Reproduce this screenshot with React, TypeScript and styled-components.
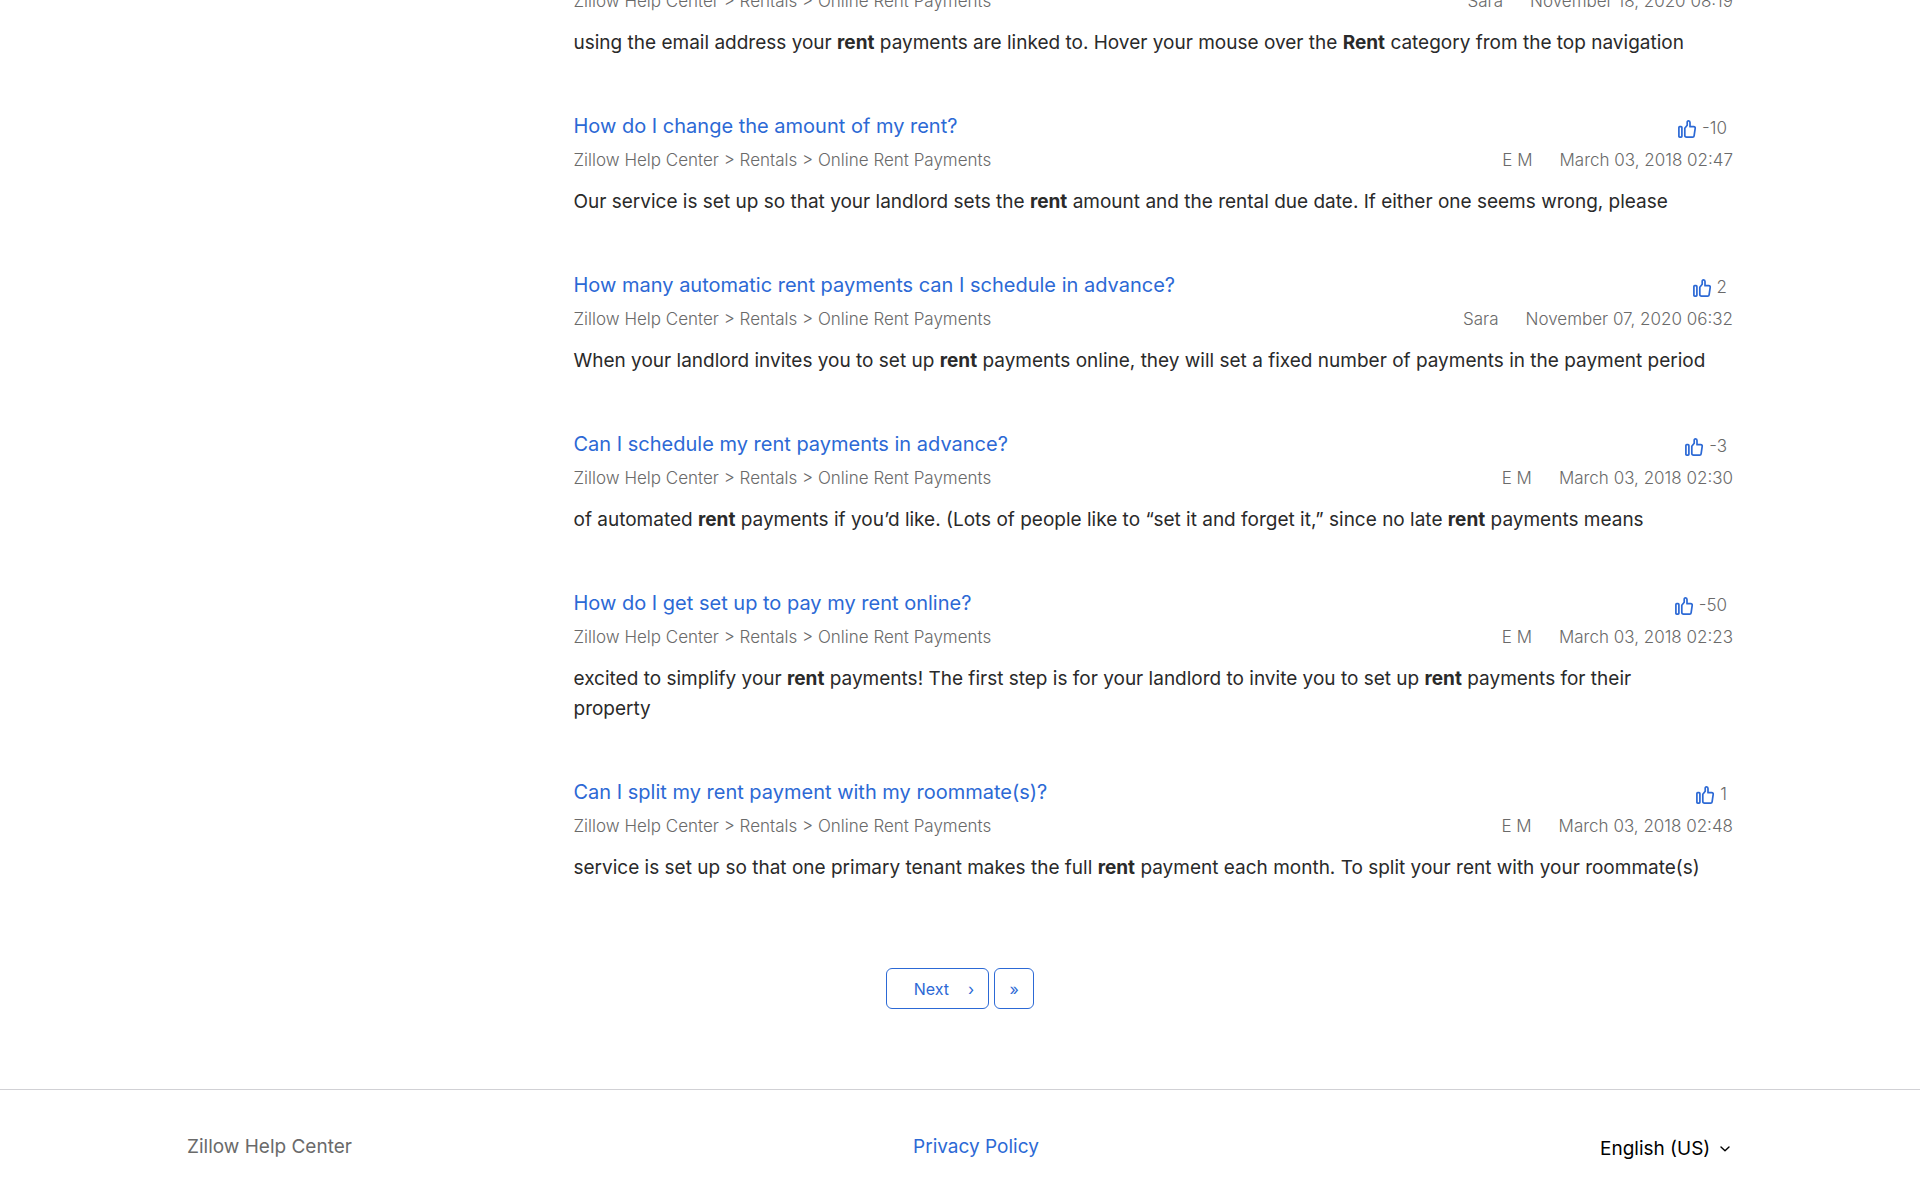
import React from 'react';
import styled, { createGlobalStyle } from 'styled-components';

const blue = '#2c69d5';

const GlobalStyle = createGlobalStyle`
  *, *::before, *::after { box-sizing: border-box; }
  body {
    margin: 0;
    background: #fff;
    color: #2a2a2a;
    font: 400 19px/30px Inter, "Liberation Sans", sans-serif;
  }
`;

const Page = styled.div`
  display: flex;
  flex-direction: column;
  justify-content: flex-end;
  height: 100vh;
  overflow: hidden;
`;

const Container = styled.div`
  width: 100%;
  max-width: 1546px;
  margin: 0 auto;
`;

const Results = styled.main`
  flex-shrink: 0;
`;

const ResultList = styled.ul`
  display: flex;
  flex-direction: column;
  gap: 52px;
  width: 75%;
  margin: 0 0 0 auto;
  padding: 0;
  list-style: none;
`;

const Heading = styled.div`
  display: flex;
  justify-content: space-between;
  margin-bottom: 4px;
  padding-right: 6px;
`;

const Title = styled.h2`
  margin: 0;
  font-size: 20px;
  font-weight: 400;
  line-height: 32px;
`;

const Link = styled.a`
  color: ${blue};
  text-decoration: none;
  &:hover { text-decoration: underline; }
`;

const Votes = styled.span`
  display: flex;
  align-items: center;
  gap: 5px;
  padding-top: 4px;
  color: #6a6a6a;
  font-size: 17px;
  font-weight: 300;
  line-height: 28px;
`;

const Meta = styled.div`
  display: flex;
  justify-content: space-between;
  margin-bottom: 13px;
  color: #6a6a6a;
  font-size: 17px;
  font-weight: 300;
  line-height: 28px;
`;

const Byline = styled.div`
  display: flex;
  gap: 27px;
`;

const Excerpt = styled.p`
  margin: 0;
  padding-right: 24px;
`;

const Pagination = styled.nav`
  display: flex;
  justify-content: center;
  gap: 5px;
  padding: 85px 0 80px;
`;

const PageLink = styled.a<{ $wide?: boolean }>`
  display: flex;
  align-items: center;
  justify-content: center;
  gap: 19px;
  height: 41px;
  min-width: 40px;
  padding: ${p => (p.$wide ? '0 14px 0 27px' : '0')};
  border: 1px solid ${blue};
  border-radius: 6px;
  color: ${blue};
  font-size: 16px;
  text-decoration: none;
`;

const Footer = styled.footer`
  flex-shrink: 0;
  border-top: 1px solid #d1d1d5;
`;

const FooterInner = styled(Container)`
  display: flex;
  align-items: center;
  justify-content: space-between;
  height: 110px;
  padding-top: 3px;
`;

const HomeLink = styled(Link)`
  color: #6a6a6a;
`;

const Language = styled.label`
  display: flex;
  align-items: center;
  gap: 9px;
  padding: 4px 3px 0 0;
  color: #000;
`;

const LanguageSelect = styled.select`
  appearance: none;
  margin: 0;
  padding: 0;
  border: 0;
  background: none;
  color: inherit;
  font: inherit;
`;

const ThumbIcon = () => (
  <svg width="19" height="20" viewBox="0 -2 19 20" fill="none" stroke={blue} strokeWidth="1.7" strokeLinejoin="round" strokeLinecap="round" aria-hidden="true">
    <rect x="0.9" y="6.6" width="3" height="10.5" rx="0.8" />
    <path d="M6.8 8.2 9.2 5.2V2.3C9.2 .3 12 .5 12 2.4V6.7H15.7C16.8 6.7 17.4 7.4 17.2 8.4L16.1 15.8C16 16.7 15.5 17.1 14.6 17.1H8.6C7.5 17.1 6.8 16.6 6.8 15.5Z" />
  </svg>
);

const ChevronIcon = () => (
  <svg width="10" height="6" viewBox="0 0 10 6" fill="none" stroke="#000" strokeWidth="1.4" strokeLinecap="round" strokeLinejoin="round" aria-hidden="true">
    <path d="M1 1 5 4.8 9 1" />
  </svg>
);

interface Result {
  title?: string;
  votes?: string;
  author: string;
  date: string;
  excerpt: React.ReactNode;
}

const results: Result[] = [
  {
    author: 'Sara',
    date: 'November 18, 2020 08:19',
    excerpt: <>using the email address your <strong>rent</strong> payments are linked to. Hover your mouse over the <strong>Rent</strong> category from the top navigation</>,
  },
  {
    title: 'How do I change the amount of my rent?',
    votes: '-10',
    author: 'E M',
    date: 'March 03, 2018 02:47',
    excerpt: <>Our service is set up so that your landlord sets the <strong>rent</strong> amount and the rental due date. If either one seems wrong, please</>,
  },
  {
    title: 'How many automatic rent payments can I schedule in advance?',
    votes: '2',
    author: 'Sara',
    date: 'November 07, 2020 06:32',
    excerpt: <>When your landlord invites you to set up <strong>rent</strong> payments online, they will set a fixed number of payments in the payment period</>,
  },
  {
    title: 'Can I schedule my rent payments in advance?',
    votes: '-3',
    author: 'E M',
    date: 'March 03, 2018 02:30',
    excerpt: <>of automated <strong>rent</strong> payments if you’d like. (Lots of people like to “set it and forget it,” since no late <strong>rent</strong> payments means</>,
  },
  {
    title: 'How do I get set up to pay my rent online?',
    votes: '-50',
    author: 'E M',
    date: 'March 03, 2018 02:23',
    excerpt: <>excited to simplify your <strong>rent</strong> payments! The first step is for your landlord to invite you to set up <strong>rent</strong> payments for their property</>,
  },
  {
    title: 'Can I split my rent payment with my roommate(s)?',
    votes: '1',
    author: 'E M',
    date: 'March 03, 2018 02:48',
    excerpt: <>service is set up so that one primary tenant makes the full <strong>rent</strong> payment each month. To split your rent with your roommate(s)</>,
  },
];

const ResultItem = ({ title, votes, author, date, excerpt }: Result) => (
  <li>
    {title && (
      <Heading>
        <Title><Link href="#">{title}</Link></Title>
        <Votes><ThumbIcon />{votes}</Votes>
      </Heading>
    )}
    <Meta>
      <span>Zillow Help Center &gt; Rentals &gt; Online Rent Payments</span>
      <Byline>
        <span>{author}</span>
        <time>{date}</time>
      </Byline>
    </Meta>
    <Excerpt>{excerpt}</Excerpt>
  </li>
);

export default function App() {
  return (
    <>
      <GlobalStyle />
      <Page>
        <Results>
          <Container>
            <ResultList>
              {results.map(r => <ResultItem key={r.date} {...r} />)}
            </ResultList>
            <Pagination aria-label="Pagination">
              <PageLink href="#" $wide><span>Next</span><span>›</span></PageLink>
              <PageLink href="#" aria-label="Last page">»</PageLink>
            </Pagination>
          </Container>
        </Results>
        <Footer>
          <FooterInner>
            <HomeLink href="#">Zillow Help Center</HomeLink>
            <Link href="#">Privacy Policy</Link>
            <Language>
              <LanguageSelect aria-label="Language" defaultValue="en">
                <option value="en">English (US)</option>
              </LanguageSelect>
              <ChevronIcon />
            </Language>
          </FooterInner>
        </Footer>
      </Page>
    </>
  );
}
